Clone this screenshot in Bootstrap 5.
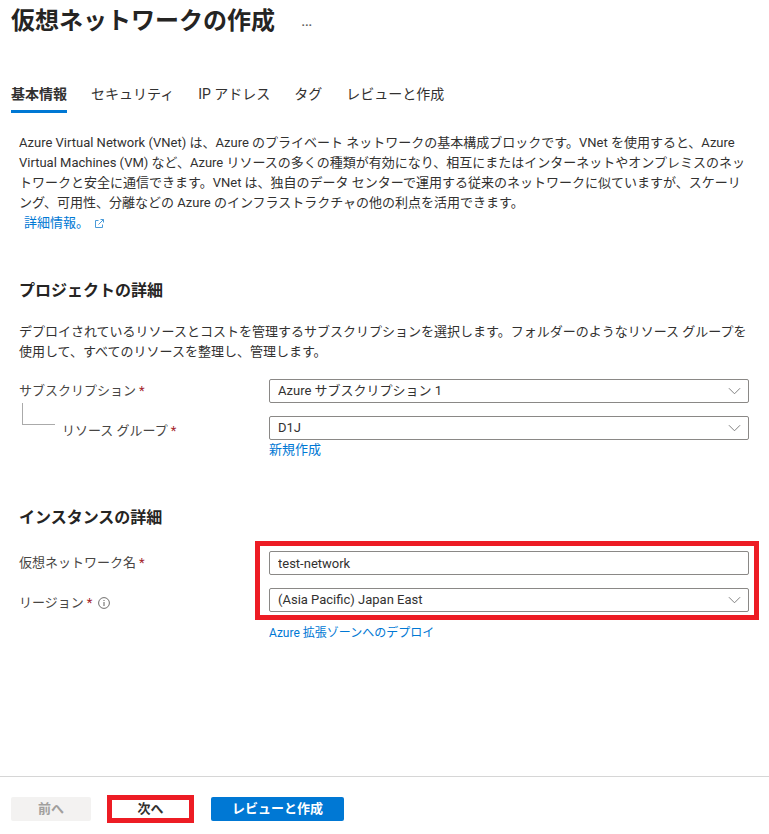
<!DOCTYPE html>
<html lang="ja">
<head>
<meta charset="utf-8">
<title>仮想ネットワークの作成</title>
<link href="https://cdn.jsdelivr.net/npm/bootstrap@5.3.0/dist/css/bootstrap.min.css" rel="stylesheet">
<style>
html,body{height:834px;overflow:hidden}
body{font-family:Roboto,"Noto Sans CJK JP",sans-serif;font-size:13px;line-height:20px;color:#323130;background:#fff}
.pg{height:834px}
.ttl{font-family:inherit;font-size:24px;line-height:32px;font-weight:700;color:#252423;margin:0;padding:5px 0 0 11px}
.more{margin-left:26px;font-size:17px;line-height:12px;color:#605e5c;letter-spacing:0;padding-top:2px}
.tabbar{margin-top:45px;padding-left:11px;gap:24px}
.tabbar .nav-link{padding:0 0 4px;font-size:14px;line-height:24px;color:#323130;border-bottom:3px solid transparent;border-radius:0;background:none}
.tabbar .nav-link.active{font-weight:700;border-bottom-color:#0078d4;color:#323130}
.body-wrap{padding:20px 20px 0 19px}
.desc{margin:0;white-space:nowrap;color:#323130}
.lnk{color:#0078d4;text-decoration:none}
.more-info{padding-left:5px;display:inline-flex;align-items:center;gap:5px}
.sect{font-size:16px;line-height:22px;font-weight:700;color:#252423;margin:0}
.sect1{margin-top:47px}
.desc2{margin-top:20px}
.frow{display:flex;align-items:center;height:24px}
.lab{width:250px;flex:none;color:#484644;display:flex;align-items:center}
.star{color:#a4262c;margin-left:3px}
.ctl{flex:1 1 auto;position:relative}
.form-select.fld,.form-control.fld{height:24px;min-height:24px;padding:0 30px 0 8px;font-size:13px;line-height:22px;color:#323130;border:1px solid #8a8886;border-radius:2px;box-shadow:none;font-family:inherit}
.form-select.fld{background-image:url("data:image/svg+xml,%3Csvg xmlns='http://www.w3.org/2000/svg' viewBox='0 0 14 8'%3E%3Cpath d='M1 1l6 6 6-6' fill='none' stroke='%23777' stroke-width='1'/%3E%3C/svg%3E");background-size:13px 8px;background-position:right 7px center}
.row-first{margin-top:17px}
.tree{width:33px;height:22px;flex:none;margin:-13px 7px 0 3px;border-left:1px solid #aaa;border-bottom:1px solid #aaa;align-self:flex-start}
.sub-lab{width:207px;padding-top:6px}
.new-link{margin-top:0}
.inst{margin-top:47px}
.gap-row{margin-top:13px}
.first-inst{margin-top:22px}
.reg-lab{padding-top:6px}
.info-ic{margin-left:6px}
.zone{margin-top:11px}
.zone-link{font-size:12px}
.mark-box{position:absolute;border:5px solid #ed1c24;pointer-events:none}
.mb-fields{left:-14px;right:-10px;top:-10px;height:79px}
.mb-next{left:-4px;right:-4px;top:-2px;bottom:-2px}
.foot{height:58px;margin-top:auto;border-top:1px solid #d6d6d6;padding:20px 0 0 11px}
.bt{height:24px;padding:0;font-size:13px;line-height:22px;font-weight:700;border-radius:2px;border:1px solid transparent;font-family:inherit}
.bt-prev{width:80px;background:#f3f2f1;color:#a19f9d;margin-right:20px;opacity:1}
.bt-next{width:79px;background:#fff;color:#323130}
.bt-rev{width:133px;background:#0078d4;color:#fff}
.nextwrap{position:relative;display:inline-flex;margin-right:21px}
</style>
</head>
<body>
<div class="pg d-flex flex-column">
  <div class="d-flex align-items-center">
    <h1 class="ttl">仮想ネットワークの作成</h1>
    <span class="more">&#8230;</span>
  </div>
  <ul class="nav tabbar">
    <li class="nav-item"><a class="nav-link active" href="#">基本情報</a></li>
    <li class="nav-item"><a class="nav-link" href="#">セキュリティ</a></li>
    <li class="nav-item"><a class="nav-link" href="#">IP アドレス</a></li>
    <li class="nav-item"><a class="nav-link" href="#">タグ</a></li>
    <li class="nav-item"><a class="nav-link" href="#">レビューと作成</a></li>
  </ul>
  <div class="body-wrap">
    <p class="desc">Azure Virtual Network (VNet) は、Azure のプライベート ネットワークの基本構成ブロックです。VNet を使用すると、Azure<br>Virtual Machines (VM) など、Azure リソースの多くの種類が有効になり、相互にまたはインターネットやオンプレミスのネッ<br>トワークと安全に通信できます。VNet は、独自のデータ センターで運用する従来のネットワークに似ていますが、スケーリ<br>ング、可用性、分離などの Azure のインフラストラクチャの他の利点を活用できます。<br>
      <a class="lnk more-info" href="#">詳細情報。
        <svg width="11" height="11" viewBox="0 0 11 11" fill="none" stroke="#4a9ad8" stroke-width="1"><path d="M4.5 2.5H1.5v7h7V6.5"/><path d="M4.5 6.5L9.5 1.5M6.5 1.5h3v3"/></svg>
      </a>
    </p>
    <h2 class="sect sect1">プロジェクトの詳細</h2>
    <p class="desc desc2">デプロイされているリソースとコストを管理するサブスクリプションを選択します。フォルダーのようなリソース グループを<br>使用して、すべてのリソースを整理し、管理します。</p>
    <div class="frow row-first">
      <div class="lab">サブスクリプション<span class="star">*</span></div>
      <div class="ctl"><select class="form-select fld"><option>Azure サブスクリプション 1</option></select></div>
    </div>
    <div class="frow gap-row">
      <div class="tree"></div>
      <div class="lab sub-lab">リソース グループ<span class="star">*</span></div>
      <div class="ctl"><select class="form-select fld"><option>D1J</option></select></div>
    </div>
    <div class="d-flex new-link">
      <div class="lab"></div>
      <a class="lnk" href="#">新規作成</a>
    </div>
    <h2 class="sect inst">インスタンスの詳細</h2>
    <div class="frow first-inst">
      <div class="lab">仮想ネットワーク名<span class="star">*</span></div>
      <div class="ctl">
        <input class="form-control fld" type="text" value="test-network">
        <div class="mark-box mb-fields"></div>
      </div>
    </div>
    <div class="frow gap-row">
      <div class="lab reg-lab">リージョン<span class="star">*</span>
        <svg class="info-ic" width="12" height="12" viewBox="0 0 12 12" fill="none" stroke="#605e5c"><circle cx="6" cy="6" r="5.4" stroke-width="0.9"/><path d="M6 5v4" stroke-width="1"/><path d="M6 3v1" stroke-width="1"/></svg>
      </div>
      <div class="ctl"><select class="form-select fld"><option>(Asia Pacific) Japan East</option></select></div>
    </div>
    <div class="d-flex zone">
      <div class="lab"></div>
      <a class="lnk zone-link" href="#">Azure 拡張ゾーンへのデプロイ</a>
    </div>
  </div>
  <div class="foot d-flex align-items-start">
    <button class="bt bt-prev" disabled>前へ</button>
    <span class="nextwrap"><button class="bt bt-next">次へ</button><span class="mark-box mb-next"></span></span>
    <button class="bt bt-rev">レビューと作成</button>
  </div>
</div>
<script src="https://cdn.jsdelivr.net/npm/bootstrap@5.3.0/dist/js/bootstrap.bundle.min.js"></script>
</body>
</html>
